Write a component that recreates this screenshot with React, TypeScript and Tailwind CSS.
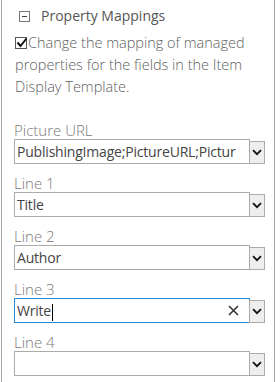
import React from 'react';

const fields = [
  { label: 'Picture URL', value: 'PublishingImage;PictureURL;Pictur' },
  { label: 'Line 1', value: 'Title' },
  { label: 'Line 2', value: 'Author' },
  { label: 'Line 3', value: 'Write', active: true },
  { label: 'Line 4', value: '' },
];

const Chevron = () => (
  <svg width="10" height="7" viewBox="0 0 10 7" className="block">
    <path d="M1 1.2 L5 5.2 L9 1.2" fill="none" stroke="#111" strokeWidth="1.8" />
  </svg>
);

const Field = ({ label, value, active }: { label: string; value: string; active?: boolean }) => (
  <div className="mb-[10px]">
    <div className="h-[18px] leading-[18px] text-[15px] font-light text-[#7a7a7a] pl-[12px]">{label}</div>
    <div className="flex items-end pl-[12px]">
      <div
        className={`w-[236px] h-[25px] border flex items-center pl-[2px] pr-[2px] ${
          active ? 'border-[#2b8ad6]' : 'border-[#ababab]'
        }`}
      >
        <span className="text-[14px] tracking-[-0.2px] text-[#444] whitespace-nowrap flex-1">
          {value}
          {active && <span className="inline-block w-px h-[17px] bg-black align-middle ml-px" />}
        </span>
        {active && (
          <svg width="11" height="11" viewBox="0 0 11 11" className="shrink-0 mr-[8px]">
            <path d="M1 1 L10 10 M10 1 L1 10" stroke="#333" strokeWidth="1.6" />
          </svg>
        )}
      </div>
      <div className="w-[16px] h-[23px] border border-[#ababab] bg-[#eeeeee] flex items-center justify-center -ml-px">
        <Chevron />
      </div>
    </div>
  </div>
);

export default function App() {
  return (
    <div className="w-[280px] h-[382px] bg-white overflow-hidden font-['Open_Sans',sans-serif]">
      <div className="ml-px w-[274px] h-full border-x border-[#a8a8a8]">
        {/* Header */}
        <div className="h-[32px] flex items-center pl-[17px]">
          <div className="w-[11px] h-[11px] border border-[#777] flex items-center justify-center">
            <div className="w-[5px] h-px bg-[#444]" />
          </div>
          <span className="ml-[11px] text-[14px] text-[#555] leading-none">Property Mappings</span>
        </div>

        {/* Description */}
        <p className="pl-[13px] pr-[6px] text-[14.5px] leading-[22px] text-[#5e5e5e] font-light">
          <span className="inline-block w-[12px] h-[12px] border border-[#555] align-[-1px] mr-px relative">
            <svg width="12" height="11" viewBox="0 0 12 11" className="absolute left-0 -top-px">
              <path d="M1.5 5.5 L4.5 9 L10.5 1.5" fill="none" stroke="#111" strokeWidth="2" />
            </svg>
          </span>
          Change the mapping of managed properties for the fields in the Item Display Template.
        </p>

        <div className="mt-[23px]">
          {fields.map((f) => (
            <Field key={f.label} {...f} />
          ))}
        </div>
      </div>
    </div>
  );
}
